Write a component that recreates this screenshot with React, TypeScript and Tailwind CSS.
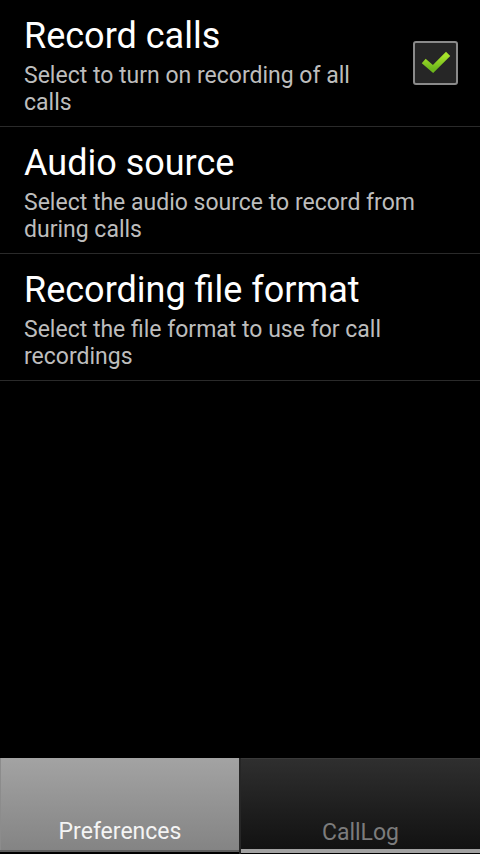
import React from "react";

const prefs = [
  {
    title: "Record calls",
    summary: "Select to turn on recording of all calls",
    checkbox: true,
  },
  {
    title: "Audio source",
    summary: "Select the audio source to record from during calls",
    checkbox: false,
  },
  {
    title: "Recording file format",
    summary: "Select the file format to use for call recordings",
    checkbox: false,
  },
];

function CheckBox() {
  return (
    <div className="w-[45px] h-[44px] shrink-0 rounded-[3px] border-2 border-[#8a8a8a] bg-[#262626] flex items-center justify-center">
      <svg width="30" height="24" viewBox="0 0 30 24">
        <defs>
          <linearGradient id="chk" x1="0" y1="0" x2="0" y2="1">
            <stop offset="0" stopColor="#a6e22a" />
            <stop offset="1" stopColor="#6db61c" />
          </linearGradient>
        </defs>
        <polyline
          points="5,12 12,18 25,5"
          fill="none"
          stroke="url(#chk)"
          strokeWidth="6"
          strokeLinecap="square"
          strokeLinejoin="miter"
        />
      </svg>
    </div>
  );
}

export default function App() {
  return (
    <div
      className="w-[480px] h-[854px] bg-black flex flex-col overflow-hidden"
      style={{ fontFamily: "Roboto, 'Noto Sans', sans-serif" }}
    >
      {/* Lista de preferências */}
      <div className="flex-1 flex flex-col">
        {prefs.map((p) => (
          <div
            key={p.title}
            className="h-[127px] border-b border-[#2a2a2a] flex items-start pl-[24px] pr-[22px]"
          >
            <div className={p.checkbox ? "w-[372px] pt-[16px]" : "flex-1 pt-[16px]"}>
              <div className="text-[36px] leading-[40px] text-white">{p.title}</div>
              <div className="mt-[6px] text-[23px] leading-[27px] text-[#bdbdbd]">{p.summary}</div>
            </div>
            {p.checkbox && (
              <div className="ml-auto self-center">
                <CheckBox />
              </div>
            )}
          </div>
        ))}
      </div>

      {/* Abas inferiores */}
      <div className="h-[96px] flex">
        <div className="w-[241px] flex flex-col border-r-2 border-[#262626]">
          <div className="flex-1 bg-gradient-to-b from-[#a3a3a3] to-[#848484] border-l border-[#8c8c8c] flex items-end justify-center pb-[5px]">
            <span className="text-[23px] leading-[26px] text-[#f4f4f4]">Preferences</span>
          </div>
          <div className="h-[2px] bg-[#5e5e5e]" />
          <div className="h-[2px] bg-black" />
        </div>
        <div className="flex-1 flex flex-col">
          <div className="flex-1 bg-gradient-to-b from-[#2f2f2f] to-[#121212] border-t border-[#3a3a3a] flex items-end justify-center pb-[3px]">
            <span className="text-[23px] leading-[26px] text-[#7c7c7c]">CallLog</span>
          </div>
          <div className="h-[4px] bg-[#a2a2a2]" />
          <div className="h-[1px] bg-black" />
        </div>
      </div>
    </div>
  );
}
